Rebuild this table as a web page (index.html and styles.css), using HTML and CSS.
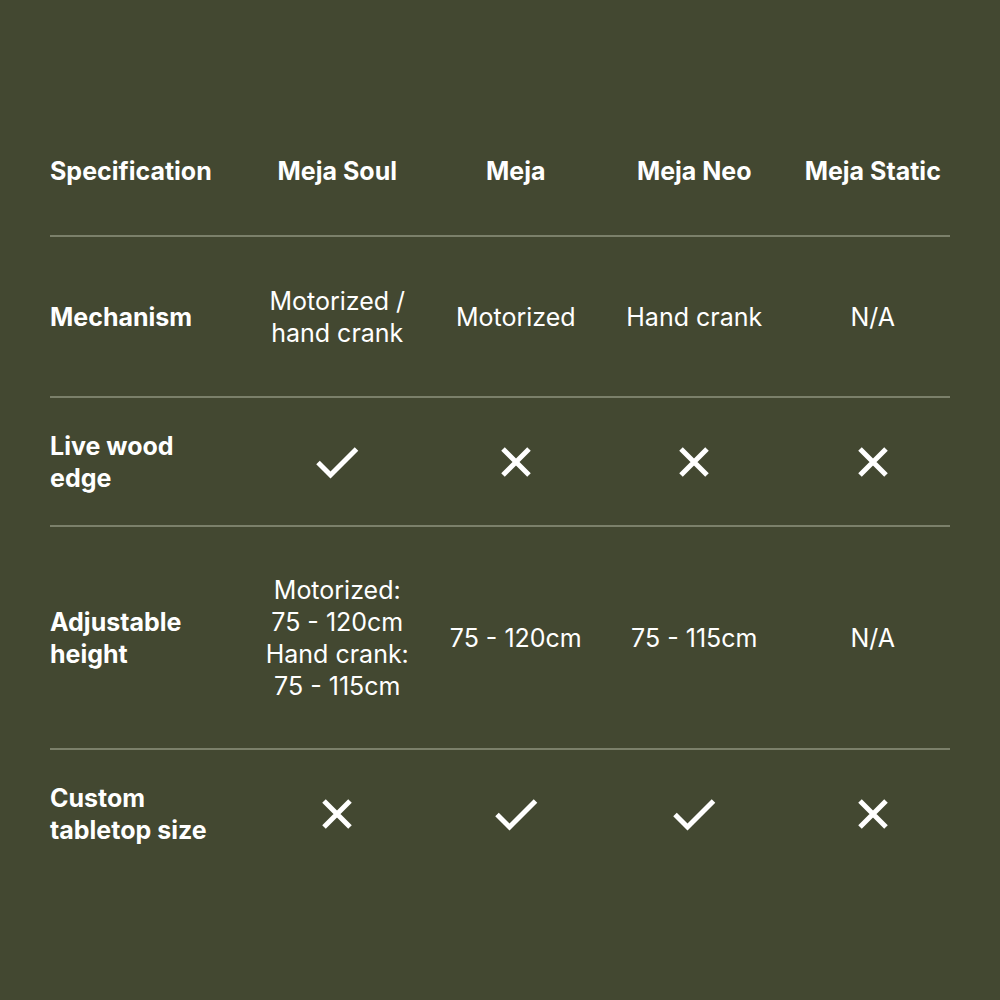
FILE: index.html
```html
<!DOCTYPE html>
<html lang="en">
<head>
<meta charset="utf-8">
<title>Meja comparison</title>
<link rel="stylesheet" href="styles.css">
</head>
<body>
<div class="page">
  <div class="table">
    <div class="row row--head">
      <div class="cell cell--label">Specification</div>
      <div class="cell cell--head">Meja Soul</div>
      <div class="cell cell--head">Meja</div>
      <div class="cell cell--head">Meja Neo</div>
      <div class="cell cell--head">Meja Static</div>
    </div>
    <div class="row row--wide">
      <div class="cell cell--label">Mechanism</div>
      <div class="cell">Motorized /<br>hand crank</div>
      <div class="cell">Motorized</div>
      <div class="cell">Hand crank</div>
      <div class="cell">N/A</div>
    </div>
    <div class="row row--narrow">
      <div class="cell cell--label">Live wood<br>edge</div>
      <div class="cell"><svg class="icon-check" viewBox="0 0 44 34"><polyline points="3,17.5 15.5,30 41.5,4"/></svg></div>
      <div class="cell"><svg class="icon-x" viewBox="0 0 32 32"><path d="M3 3 L29 29 M29 3 L3 29"/></svg></div>
      <div class="cell"><svg class="icon-x" viewBox="0 0 32 32"><path d="M3 3 L29 29 M29 3 L3 29"/></svg></div>
      <div class="cell"><svg class="icon-x" viewBox="0 0 32 32"><path d="M3 3 L29 29 M29 3 L3 29"/></svg></div>
    </div>
    <div class="row row--wide row--tall">
      <div class="cell cell--label">Adjustable<br>height</div>
      <div class="cell">Motorized:<br>75 - 120cm<br>Hand crank:<br>75 - 115cm</div>
      <div class="cell">75 - 120cm</div>
      <div class="cell">75 - 115cm</div>
      <div class="cell">N/A</div>
    </div>
    <div class="row row--narrow row--last">
      <div class="cell cell--label">Custom<br>tabletop size</div>
      <div class="cell"><svg class="icon-x" viewBox="0 0 32 32"><path d="M3 3 L29 29 M29 3 L3 29"/></svg></div>
      <div class="cell"><svg class="icon-check" viewBox="0 0 44 34"><polyline points="3,17.5 15.5,30 41.5,4"/></svg></div>
      <div class="cell"><svg class="icon-check" viewBox="0 0 44 34"><polyline points="3,17.5 15.5,30 41.5,4"/></svg></div>
      <div class="cell"><svg class="icon-x" viewBox="0 0 32 32"><path d="M3 3 L29 29 M29 3 L3 29"/></svg></div>
    </div>
  </div>
</div>
</body>
</html>
```
FILE: styles.css
```css
html, body {
  margin: 0;
  padding: 0;
  background: #434831;
}
.page {
  width: 1000px;
  height: 1000px;
  background: #434831;
  color: #ffffff;
  font-family: "Inter", "Liberation Sans", sans-serif;
  font-size: 25px;
  line-height: 32px;
  padding-top: 155px;
  box-sizing: border-box;
}
.table {
  width: 900px;
  margin-left: 50px;
}
.row {
  display: grid;
  grid-template-columns: 198px repeat(4, 178.5px);
  align-items: center;
  border-bottom: 2px solid #7b806a;
  width: 900px;
}
.row--head {
  padding: 0 0 48px;
}
.row--wide {
  padding: 48px 0 47px;
}
.row--tall {
  padding: 47px 0 46px;
}
.row--narrow {
  padding: 32px 0 31px;
}
.row--last {
  border-bottom: none;
}
.cell {
  text-align: center;
  display: flex;
  justify-content: center;
  align-items: center;
  white-space: nowrap;
}
.cell--label {
  justify-content: flex-start;
  text-align: left;
  font-weight: 700;
}
.cell--head {
  font-weight: 700;
}
.icon-check {
  width: 44px;
  height: 34px;
  fill: none;
  stroke: #ffffff;
  stroke-width: 5;
}
.icon-x {
  width: 32px;
  height: 32px;
  fill: none;
  stroke: #ffffff;
  stroke-width: 5;
}
```
